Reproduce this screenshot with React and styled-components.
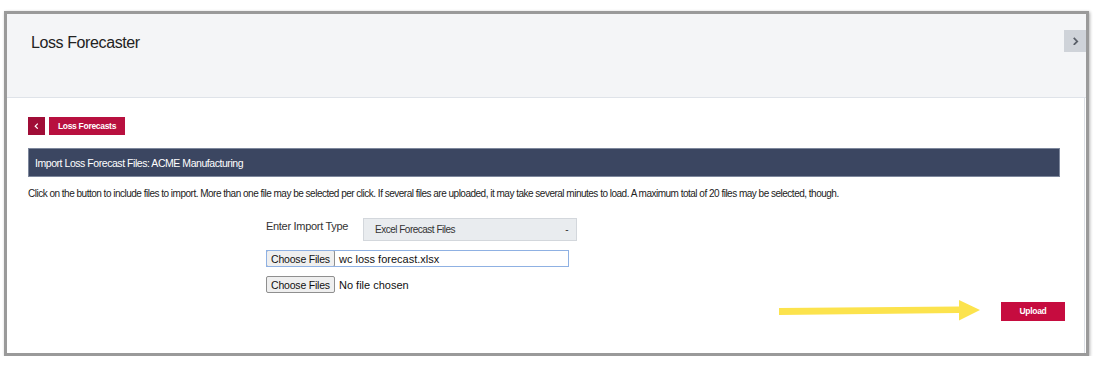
import React from 'react';
import styled, { createGlobalStyle } from 'styled-components';

const GlobalStyle = createGlobalStyle`
  body {
    margin: 0;
    background: #fff;
    font-family: "Liberation Sans", Arial, sans-serif;
  }
`;

const Frame = styled.div`
  box-sizing: border-box;
  width: 1085px;
  height: 345px;
  margin: 11px 0 0 4px;
  border: 3px solid #9a9a9a;
  box-shadow: 1px 1px 3px rgba(0, 0, 0, 0.3);
  display: flex;
  flex-direction: column;
  overflow: hidden;
`;

const Header = styled.header`
  box-sizing: border-box;
  height: 84px;
  background: #f4f5f7;
  border-bottom: 1px solid #dfe3e9;
  display: flex;
  justify-content: space-between;
  align-items: flex-start;
  padding-left: 24px;
`;

const Title = styled.h1`
  margin: 0;
  padding-top: 19px;
  font-size: 16px;
  line-height: 20px;
  font-weight: normal;
  letter-spacing: -0.4px;
  color: #222;
`;

const Toggle = styled.button`
  width: 22px;
  height: 22px;
  margin-top: 16px;
  padding: 0;
  border: none;
  background: #cfd3d9;
  display: flex;
  align-items: center;
  justify-content: center;
`;

const Body = styled.main`
  flex: 1;
  padding: 19px 24px 0 21px;
  border-right: 1px solid #dde1e7;
  margin-right: 1px;
`;

const NavRow = styled.div`
  display: flex;
  gap: 4px;
  align-items: center;
`;

const RedButton = styled.button`
  box-sizing: border-box;
  height: ${p => p.$h || 18}px;
  width: ${p => p.$w}px;
  padding: 0;
  border: none;
  background: ${p => p.$bg || '#b8103f'};
  color: #fff;
  font-family: "Liberation Sans", Arial, sans-serif;
  font-weight: bold;
  font-size: 8.5px;
  letter-spacing: -0.3px;
  display: flex;
  align-items: center;
  justify-content: center;
`;

const Panel = styled.div`
  box-sizing: border-box;
  margin-top: 13px;
  height: 29px;
  background: #3b4661;
  border: 1px solid #7d879c;
  color: #fff;
  font-size: 10.5px;
  letter-spacing: -0.45px;
  padding-left: 6px;
  display: flex;
  align-items: center;
`;

const Note = styled.p`
  margin: 10px 0 0 0;
  font-size: 10px;
  line-height: 14px;
  letter-spacing: -0.5px;
  color: #222;
`;

const Form = styled.div`
  margin-left: 238px;
  margin-top: 17px;
  display: flex;
  flex-direction: column;
`;

const TypeRow = styled.div`
  display: flex;
  align-items: flex-start;
`;

const Label = styled.span`
  width: 97px;
  font-size: 11px;
  line-height: 14px;
  padding-top: 1px;
  letter-spacing: -0.3px;
  color: #333;
`;

const Select = styled.div`
  box-sizing: border-box;
  width: 214px;
  height: 23px;
  background: #e9ecef;
  border: 1px solid #d3d7dc;
  display: flex;
  align-items: center;
  justify-content: space-between;
  padding: 0 8px 0 11px;
  font-size: 10px;
  letter-spacing: -0.5px;
  color: #333;
`;

const FileRow = styled.div`
  box-sizing: border-box;
  margin-top: ${p => p.$mt}px;
  height: 17px;
  width: ${p => (p.$focused ? '303px' : 'auto')};
  display: flex;
  align-items: center;
  gap: 4px;
  outline: ${p => (p.$focused ? '1px solid #8fb1e3' : 'none')};
  outline-offset: -1px;
  font-size: 11px;
  color: #111;
`;

const ChooseButton = styled.span`
  box-sizing: border-box;
  height: 17px;
  width: 69px;
  background: #efefef;
  border: 1px solid #8f8f8f;
  border-radius: 2px;
  display: flex;
  align-items: center;
  justify-content: center;
  font-size: 10.5px;
  letter-spacing: -0.2px;
  color: #111;
`;

const ActionRow = styled.div`
  margin-top: 7px;
  margin-right: -5px;
  display: flex;
  justify-content: flex-end;
  align-items: center;
  gap: 20px;
`;

function Chevron({ dir, color, size }) {
  const pts = dir === 'left' ? '6,1 2,5 6,9' : '2,1 6,5 2,9';
  return (
    <svg width={size} height={size * 1.25} viewBox="0 0 8 10">
      <polyline points={pts} fill="none" stroke={color} strokeWidth="2" />
    </svg>
  );
}

function Arrow() {
  return (
    <svg width="202" height="22" viewBox="0 0 202 22">
      <polygon points="0,8 180,6.5 180,0 201,10 180,20.5 180,13 0,15" fill="#fce34d" />
    </svg>
  );
}

export default function App() {
  return (
    <>
      <GlobalStyle />
      <Frame>
        <Header>
          <Title>Loss Forecaster</Title>
          <Toggle>
            <Chevron dir="right" color="#5a5f68" size={7} />
          </Toggle>
        </Header>
        <Body>
          <NavRow>
            <RedButton $w={17} $bg="#a00d37">
              <Chevron dir="left" color="#fff" size={5} />
            </RedButton>
            <RedButton $w={76}>Loss Forecasts</RedButton>
          </NavRow>
          <Panel>Import Loss Forecast Files: ACME Manufacturing</Panel>
          <Note>
            Click on the button to include files to import. More than one file may be selected per click. If several files are uploaded, it may take several minutes to load. A maximum total of 20 files may be selected, though.
          </Note>
          <Form>
            <TypeRow>
              <Label>Enter Import Type</Label>
              <Select>
                <span>Excel Forecast Files</span>
                <span>-</span>
              </Select>
            </TypeRow>
            <FileRow $mt={9} $focused>
              <ChooseButton>Choose Files</ChooseButton>
              <span>wc loss forecast.xlsx</span>
            </FileRow>
            <FileRow $mt={9}>
              <ChooseButton>Choose Files</ChooseButton>
              <span>No file chosen</span>
            </FileRow>
          </Form>
          <ActionRow>
            <Arrow />
            <RedButton $w={64} $h={19} $bg="#c60c3f">Upload</RedButton>
          </ActionRow>
        </Body>
      </Frame>
    </>
  );
}
